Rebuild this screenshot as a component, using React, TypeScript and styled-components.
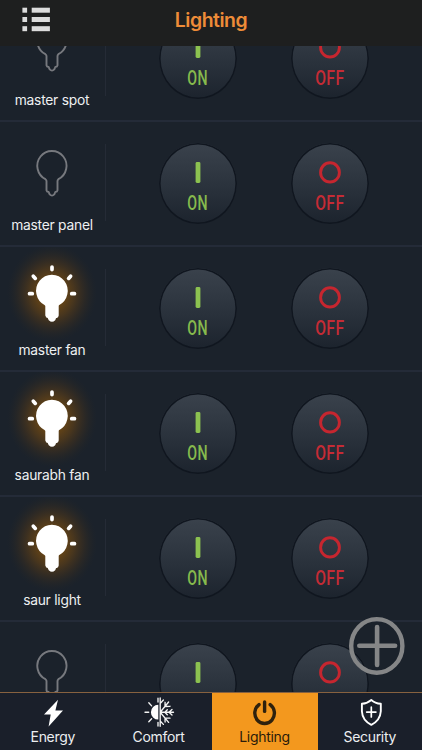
import React from "react";
import styled, { createGlobalStyle } from "styled-components";

const Global = createGlobalStyle`
  * { box-sizing: border-box; }
  html, body { margin: 0; padding: 0; background: #1b222c; }
  body { font-family: Inter, "Liberation Sans", sans-serif; }
  button { font: inherit; border: 0; padding: 0; margin: 0; background: none; }
`;

const Screen = styled.div`
  position: relative;
  display: flex;
  flex-direction: column;
  width: 422px;
  height: 750px;
  overflow: hidden;
  background: #1b222b;
`;

const Header = styled.header`
  flex: none;
  display: grid;
  grid-template-columns: 72px 1fr 72px;
  height: 46px;
  background: #1e1f1f;
`;

const MenuButton = styled.button`
  display: block;
  width: 72px;
  height: 46px;
  svg { display: block; }
`;

const Title = styled.h1`
  margin: 0;
  padding-top: 8px;
  text-align: center;
  font-size: 19.4px;
  line-height: 25px;
  font-weight: 600;
  letter-spacing: -0.46px;
  color: #ee8c38;
`;

const List = styled.main`
  flex: 1;
  min-height: 0;
  overflow: hidden;
`;

const Rows = styled.div`
  margin-top: -49px;
`;

const Row = styled.section`
  display: flex;
  height: 125px;
  border-bottom: 2px solid #242b38;
`;

const Device = styled.div`
  width: 105px;
  height: 123px;
  display: flex;
  flex-direction: column;
  svg { display: block; flex: none; }
`;

const DeviceName = styled.div`
  width: 104px;
  text-align: center;
  white-space: nowrap;
  font-size: 13.8px;
  line-height: 18px;
  letter-spacing: -0.24px;
  color: #eef0f1;
`;

const Divider = styled.div`
  width: 1px;
  height: 77px;
  margin-top: 22px;
  background: #252b36;
`;

const Controls = styled.div`
  display: flex;
  gap: 54px;
  padding: 21px 0 0 53px;
`;

const RoundButton = styled.button<{ $color: string }>`
  display: flex;
  flex-direction: column;
  align-items: center;
  width: 78px;
  height: 81px;
  border-radius: 50%;
  background: linear-gradient(#3a424c 0%, #313943 32%, #272f39 64%, #1c232d 100%);
  box-shadow: inset 0 0 0 1.6px #10161f;
  color: ${(p) => p.$color};
  svg { display: block; margin-top: 17px; flex: none; }
`;

const ButtonText = styled.span<{ $scale: number }>`
  margin-top: 7px;
  font-family: Roboto, "Liberation Sans", sans-serif;
  font-size: 20px;
  line-height: 22px;
  font-weight: 500;
  letter-spacing: 0.6px;
  transform: scaleX(${(p) => p.$scale});
`;

const AddButton = styled.button`
  position: absolute;
  left: 348px;
  top: 616px;
  width: 58px;
  height: 60px;
  svg { display: block; }
`;

const TabBar = styled.nav`
  position: relative;
  flex: none;
  display: grid;
  grid-template-columns: 105.5px 106px 106px 104.5px;
  height: 58px;
  border-top: 1px solid #87613f;
  background: #1a1f2a;
`;

const Tab = styled.button<{ $active?: boolean }>`
  display: flex;
  flex-direction: column;
  align-items: center;
  font-size: 14px;
  line-height: 18px;
  letter-spacing: -0.32px;
  background: ${(p) => (p.$active ? "#f3981e" : "#1a1f2a")};
  color: ${(p) => (p.$active ? "#2a1b0a" : "#eceef0")};
  svg { display: block; margin-bottom: 1px; flex: none; }
`;

const bulb =
  "M46.7 69 V59.6 Q46.7 58.6 45.6 57.8 A14.6 14.9 0 1 1 58.6 57.8 Q57.7 58.6 57.7 59.6 V69 Q57.5 70.5 55.5 70.6 L54.5 73 Q52.2 75.4 49.9 73 L48.8 70.6 Q46.9 70.5 46.7 69 Z";

const Lamp = ({ lit }: { lit: boolean }) => (
  <svg width="104" height="94" viewBox="0 0 104 94">
    {lit && (
      <>
        <defs>
          <radialGradient id="halo">
            <stop offset="0" stopColor="#7a4d10" stopOpacity="0.9" />
            <stop offset="0.3" stopColor="#744b12" stopOpacity="0.8" />
            <stop offset="0.5" stopColor="#664315" stopOpacity="0.6" />
            <stop offset="0.68" stopColor="#523818" stopOpacity="0.4" />
            <stop offset="0.85" stopColor="#3c2f1d" stopOpacity="0.2" />
            <stop offset="1" stopColor="#2a2822" stopOpacity="0" />
          </radialGradient>
        </defs>
        <ellipse cx="52" cy="46" rx="45" ry="49" fill="url(#halo)" />
        <g stroke="#fff" strokeWidth="3.7" strokeLinecap="round">
          <path d="M52 20v2.6M33.3 29.2l2 2.2M70.6 29.2l-2 2.2M29.5 46.7h2.8M71.7 46.7h2.8" />
        </g>
      </>
    )}
    <path
      d={bulb}
      transform="translate(-0.2 -0.6)"
      fill={lit ? "#fff" : "none"}
      stroke={lit ? "#fff" : "#77797e"}
      strokeWidth={lit ? 2.4 : 1.9}
      strokeLinejoin="round"
    />
  </svg>
);

const OnMark = () => (
  <svg width="24" height="25" viewBox="0 0 24 25">
    <rect x="9.6" y="2" width="4.8" height="21" rx="1.4" fill="#8cc250" />
  </svg>
);

const OffMark = () => (
  <svg width="24" height="25" viewBox="0 0 24 25">
    <ellipse cx="12" cy="12.4" rx="9.4" ry="9.6" fill="none" stroke="#c6262f" strokeWidth="2.9" />
  </svg>
);

const MenuIcon = () => (
  <svg width="72" height="46" fill="#dcdcdc">
    {[7.7, 17, 26.2].map((y) => (
      <g key={y}>
        <rect x="22.4" y={y} width="4.7" height="5" />
        <rect x="31.7" y={y} width="18.2" height="5" />
      </g>
    ))}
  </svg>
);

const EnergyIcon = () => (
  <svg width="34" height="34">
    <path d="M22 6.8 L8 21.6 H14.7 L12.6 33.4 L27 17.6 H19.4 Z" fill="#fff" />
  </svg>
);

const ComfortIcon = () => (
  <svg width="34" height="34" fill="none" stroke="#f4f4f4" strokeWidth="1.35" strokeLinecap="round">
    <path d="M16.3 11.8 A7.4 7.4 0 0 0 16.3 26.6 Z" fill="#fff" stroke="none" />
    <path d="M3 19.2h3.7M6.8 9.8l2.8 3.1M6.8 28.8l2.8-3.1M16 5.2v3.8M16 29.3v3.7" />
    <path d="M18.2 5v28.3M18.2 19.2H31.5M18.2 19.2l8.4-10.2M18.2 19.2l8.4 10.2M18.4 10.2l3-3.2M18.4 28.2l3 3.2M23 13.5l.1-4.2M23 13.5l5-.2M23 24.9l.1 4.2M23 24.9l5 .2M27 19.2l3-2.8M27 19.2l3 2.8M22.8 19.2l2.5-2.5M22.8 19.2l2.5 2.5" />
  </svg>
);

const PowerIcon = () => (
  <svg width="34" height="34" fill="none" stroke="#2e210d" strokeLinecap="round">
    <path d="M11 11.6 A9.8 10.4 0 1 0 22.2 11.6" strokeWidth="3.4" />
    <path d="M16.6 8.9v9.5" strokeWidth="3.4" />
  </svg>
);

const ShieldIcon = () => (
  <svg width="34" height="34" fill="none" stroke="#fff" strokeWidth="1.9" strokeLinejoin="round" strokeLinecap="round">
    <path d="M18.3 7 Q14.5 10.4 8.9 10.8 V18.2 Q9.3 27.2 18.3 31.8 Q27.3 27.2 27.8 18.2 V10.8 Q22 10.4 18.3 7 Z" />
    <path d="M18.3 14.2v9.8M13.7 19.1h9.2" strokeWidth="1.7" />
  </svg>
);

type DeviceInfo = { name?: string; lit: boolean };

const devices: DeviceInfo[] = [
  { name: "master spot", lit: false },
  { name: "master panel", lit: false },
  { name: "master fan", lit: true },
  { name: "saurabh fan", lit: true },
  { name: "saur light", lit: true },
  { lit: false },
];

export default function App() {
  return (
    <>
      <Global />
      <Screen>
        <Header>
          <MenuButton aria-label="Menu"><MenuIcon /></MenuButton>
          <Title>Lighting</Title>
        </Header>
        <List>
          <Rows>
            {devices.map((d, i) => (
              <Row key={i}>
                <Device>
                  <Lamp lit={d.lit} />
                  {d.name && <DeviceName>{d.name}</DeviceName>}
                </Device>
                <Divider />
                <Controls>
                  <RoundButton $color="#86bb4d" aria-label="On">
                    <OnMark />
                    {d.name && <ButtonText $scale={0.71}>ON</ButtonText>}
                  </RoundButton>
                  <RoundButton $color="#c62b35" aria-label="Off">
                    <OffMark />
                    {d.name && <ButtonText $scale={0.78}>OFF</ButtonText>}
                  </RoundButton>
                </Controls>
              </Row>
            ))}
          </Rows>
        </List>
        <TabBar>
          <Tab><EnergyIcon />Energy</Tab>
          <Tab><ComfortIcon />Comfort</Tab>
          <Tab $active><PowerIcon />Lighting</Tab>
          <Tab><ShieldIcon />Security</Tab>
        </TabBar>
        <AddButton aria-label="Add device">
          <svg width="58" height="60" fill="none" stroke="#858687" strokeLinecap="round">
            <ellipse cx="28.8" cy="29.9" rx="25.6" ry="26.8" strokeWidth="4.4" />
            <path d="M11.3 29.8h35.8M29.1 11v38" strokeWidth="4.6" />
          </svg>
        </AddButton>
      </Screen>
    </>
  );
}
